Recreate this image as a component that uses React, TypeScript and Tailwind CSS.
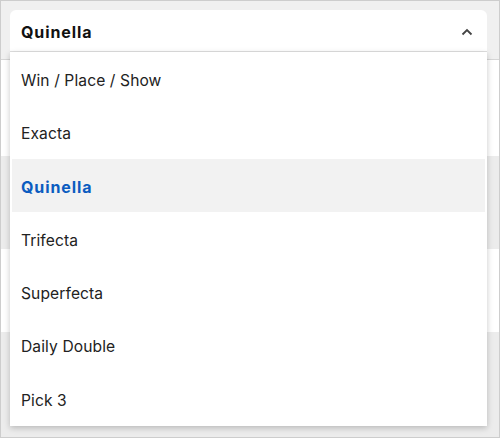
import React from 'react'

const options = ['Win / Place / Show', 'Exacta', 'Quinella', 'Trifecta', 'Superfecta', 'Daily Double', 'Pick 3']

export default function App() {
  const selected = 'Quinella'
  return (
    <div className="relative w-[500px] h-[438px] overflow-hidden border border-[#cdcdcd] bg-[#f0f0f0] font-['Inter',sans-serif]">
      {/* page content behind the menu */}
      <div className="flex flex-col h-full">
        <div className="h-[59px] bg-[#f0f0f0] border-b border-[#d6d6d6]" />
        <div className="h-[96px] bg-white" />
        <div className="h-[93px] bg-[#ececec]" />
        <div className="h-[83px] bg-white" />
        <div className="flex-1 bg-[#ececec]" />
      </div>

      {/* select + open menu */}
      <div className="absolute left-[9px] top-[9px] w-[477px]">
        <div className="flex h-[42px] items-center justify-between rounded-t-md bg-white pl-[11px] pr-[14px] pt-[3px] border-b border-[#e0e0e0]">
          <span className="text-[16px] font-bold tracking-[0.9px] text-[#111]">{selected}</span>
          <svg width="12" height="8" viewBox="0 0 12 8" className="text-[#444]">
            <polyline points="1.5,6.5 6,2 10.5,6.5" fill="none" stroke="currentColor" strokeWidth="1.8" />
          </svg>
        </div>
        <ul className="bg-white px-[2px] shadow-[0_2px_6px_rgba(0,0,0,0.22)]">
          {options.map((o) => (
            <li
              key={o}
              className={
                o === selected
                  ? 'flex h-[53.4px] items-center bg-[#f2f2f2] pl-[9px] pt-[3px] text-[16px] font-bold tracking-[0.9px] text-[#0b5cc0]'
                  : 'flex h-[53.4px] items-center pl-[9px] pt-[3px] text-[15.6px] tracking-[0.1px] text-[#222]'
              }
            >
              {o}
            </li>
          ))}
        </ul>
      </div>
    </div>
  )
}
